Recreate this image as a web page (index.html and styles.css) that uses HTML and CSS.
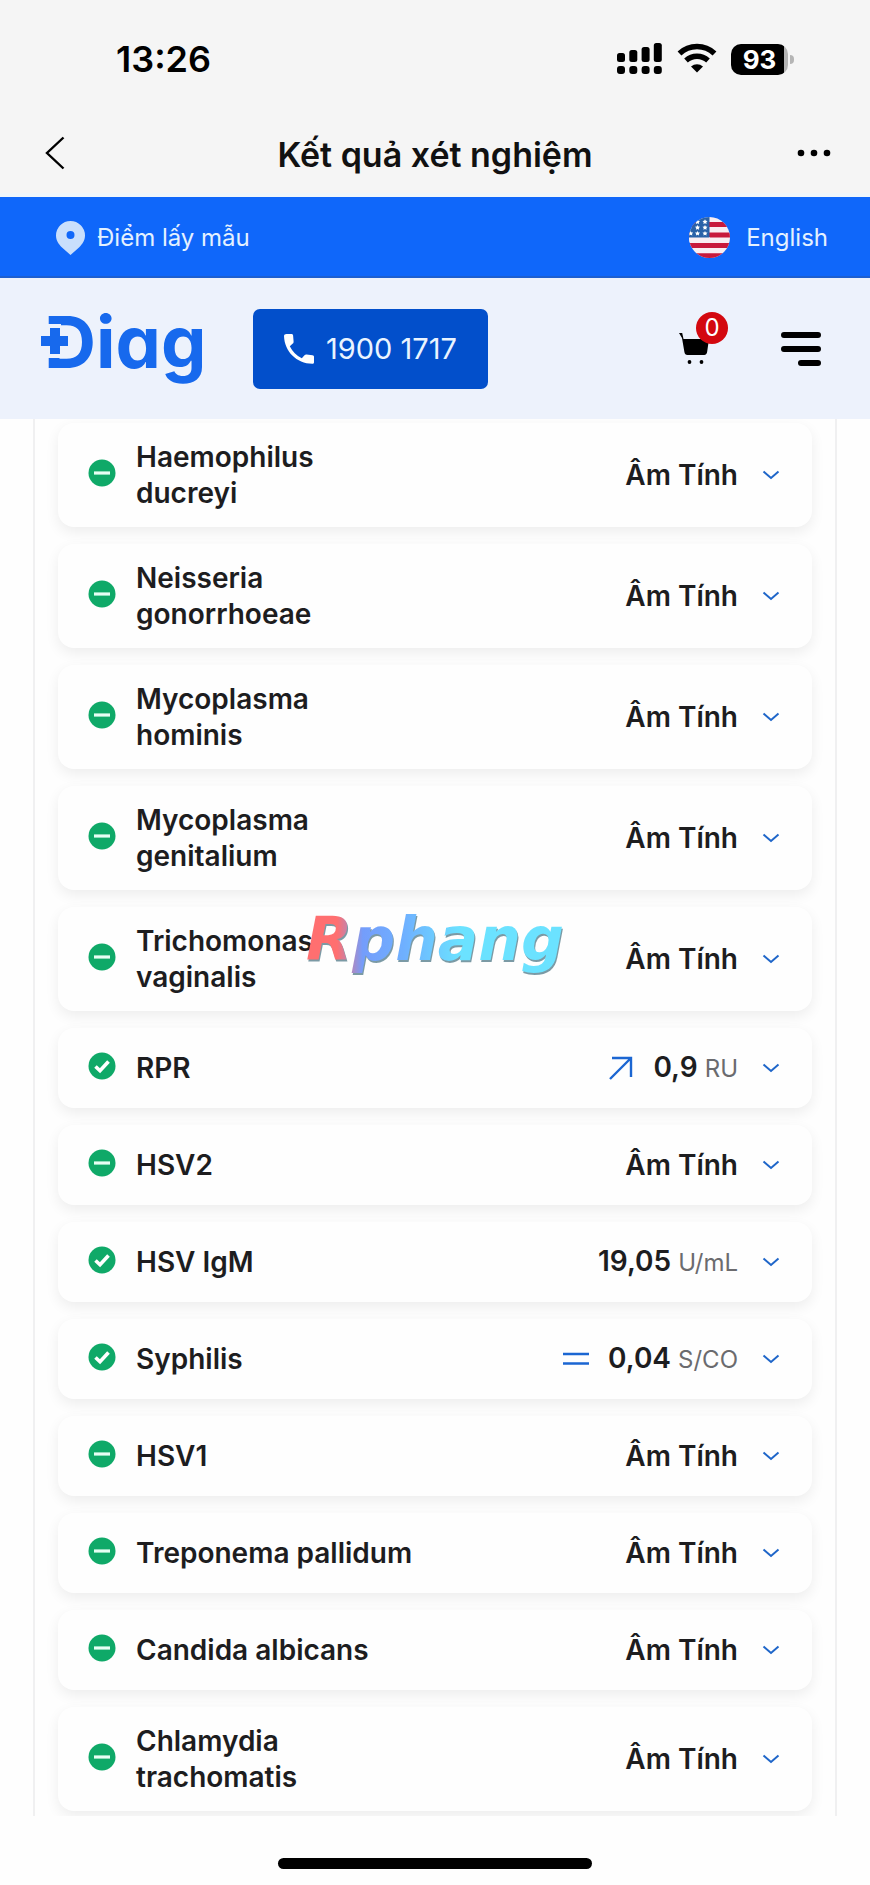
FILE: index.html
```
<!DOCTYPE html>
<html lang="vi">

<head>
    <meta charset="utf-8">
    <meta name="viewport" content="width=device-width, initial-scale=1.0">
    <title>Kết quả xét nghiệm</title>
    <link rel="stylesheet" href="styles.css">
</head>

<body>

    <svg class="symbols" aria-hidden="true">
        <symbol id="minus" viewBox="0 0 28 32">
            <circle cx="14" cy="14" r="13.5" fill="#0fa968" />
            <path d="M6 14h16" stroke="#e6fff4" stroke-width="3.2" />
        </symbol>
        <symbol id="check" viewBox="0 0 28 32">
            <circle cx="14" cy="14" r="13.5" fill="#0fa968" />
            <path d="M7.5 14.5l4.5 4.3 8.5-9.3" fill="none" stroke="#fff" stroke-width="3.6" />
        </symbol>
        <symbol id="chevron" viewBox="0 0 22 22">
            <path d="M3.5 7.5l7.5 6.5 7.5-6.5" fill="none" stroke="#1f66c9" stroke-width="2" />
        </symbol>
    </svg>

    <div class="statusbar">
        <span class="clock">13:26</span>
        <div class="status-icons">
            <svg width="46" height="32" viewBox="0 0 46 32">
                <rect x="0" y="10" width="8" height="9" rx="2.5" />
                <rect x="12.3" y="7" width="8" height="12" rx="2.5" />
                <rect x="24.6" y="4" width="8" height="15" rx="2.5" />
                <rect x="36.8" y="0" width="8" height="19" rx="2.5" />
                <rect x="0" y="23" width="8" height="8" rx="3" />
                <rect x="12.3" y="23" width="8" height="8" rx="3" />
                <rect x="24.6" y="23" width="8" height="8" rx="3" />
                <rect x="36.8" y="23" width="8" height="8" rx="3" />
            </svg>
            <svg width="40" height="32" viewBox="0 0 40 32">
                <path d="M2.5 10.5a25.5 25.5 0 0 1 35 0" fill="none" stroke="#000" stroke-width="5.6" />
                <path d="M9 17.5a16.5 16.5 0 0 1 22 0" fill="none" stroke="#000" stroke-width="5.4" />
                <path d="M14 23.5a9.5 9.5 0 0 1 12 0l-6 6z" />
            </svg>
            <div class="battery">93</div>
        </div>
    </div>

    <div class="titlebar">
        <button class="icon-btn" aria-label="Quay lại">
            <svg width="34" height="34" viewBox="-6 0 34 34">
                <path d="M18.500 1.500L2 17l16.500 15.500" fill="none" stroke="#000" stroke-width="2.4" />
            </svg>
        </button>
        <h1>Kết quả xét nghiệm</h1>
        <button class="icon-btn" aria-label="Thêm">
            <svg width="34" height="34" viewBox="0 0 34 34">
                <circle cx="4" cy="17" r="3.3" />
                <circle cx="17" cy="17" r="3.3" />
                <circle cx="30" cy="17" r="3.3" />
            </svg>
        </button>
    </div>

    <div class="topbar">
        <a href="#" class="location">
            <svg width="29" height="34" viewBox="0 0 29 34">
                <path fill="#c9dffc" fill-rule="evenodd" d="M14.500 0A14.500 14.500 0 0 0 0 14.500c0 5 2.500 8.500 6 12L14.500 34l8.500-7.500c3.500-3.500 6-7 6-12A14.500 14.500 0 0 0 14.500 0zm0 10a4 4 0 1 1 0 8 4 4 0 0 1 0-8z" />
            </svg>
            Điểm lấy mẫu
        </a>
        <a href="#" class="language">
            <svg width="41" height="41" viewBox="0 0 41 41">
                <clipPath id="round">
                    <circle cx="20.5" cy="20.5" r="20.5" />
                </clipPath>
                <g clip-path="url(#round)">
                    <path fill="#f9eef2" d="M0 0h41v41H0z" />
                    <path stroke="#c8193c" stroke-width="5.200" d="M0 7.500h41M0 18h41M0 28.500h41M0 38.800h41" />
                    <path fill="#f9eef2" d="M0 20h21v6H0z" />
                    <path fill="#2a62a8" d="M0 0h20.500v20.500H0z" />
                    <g fill="#fff">
                        <path id="star" d="M16 2.300l.8 1.500 1.700.2-1.200 1.300.3 1.700-1.600-.8-1.600.8.3-1.700L13.500 4l1.700-.2z" />
                        <use href="#star" x="-7.500" />
                        <use href="#star" y="5.800" />
                        <use href="#star" x="-7.500" y="5.800" />
                        <use href="#star" y="11.600" />
                        <use href="#star" x="-7.500" y="11.600" />
                        <use href="#star" x="-14.300" y="11.600" />
                    </g>
                </g>
            </svg>
            English
        </a>
    </div>

    <header>
        <a href="#" class="logo" aria-label="Diag">
            <svg width="166" height="90" viewBox="0 0 166 90">
                <text x="3" y="64">Diag</text>
                <path fill="#edf2fc" d="M0 20h20v34H0zM18 29h12v15H18z" />
                <path stroke="#1769ed" stroke-width="10" d="M14 24v26M0 37h27" />
            </svg>
        </a>
        <a href="tel:19001717" class="phone">
            <svg width="30" height="30" viewBox="0 0 30 30">
                <path fill="#fff" d="M2.500 0h5c1 0 1.500.6 1.600 1.500l.5 6c0 1-.2 1.500-.8 2.100L5.800 12.200c2.700 5.500 6.500 9.300 12 12l2.700-3c.6-.6 1.200-.8 2-.7l6 .8c1 .2 1.500.8 1.500 1.700v5.200c0 1-.7 1.600-1.700 1.600C12.500 29.500.5 17.500 0 2 0 .8 1 0 2.500 0z" />
            </svg>
            1900 1717
        </a>
        <button class="icon-btn cart" aria-label="Giỏ hàng">
            <svg width="30" height="32" viewBox="0 0 30 32">
                <path d="M0 0h3.200l1.300 6H30l-1.800 12.500c-.3 2-1.200 3.500-3 3.500H8.500c-1.800 0-2.800-1.200-3.100-3L3 5z" />
                <circle cx="10.500" cy="29" r="1.900" />
                <circle cx="22.500" cy="29" r="1.900" />
            </svg>
            <span class="badge">0</span>
        </button>
        <button class="icon-btn" aria-label="Menu">
            <svg width="40" height="36" viewBox="0 0 40 36">
                <path d="M3 4h34M3 18h34M20 32h17" stroke="#000" stroke-width="6" stroke-linecap="round" />
            </svg>
        </button>
    </header>

    <main>
        <ul class="results">
            <li>
                <button class="result">
                    <svg class="state"><use href="#minus" /></svg>
                    <span class="name">Haemophilus ducreyi</span>
                    <span class="value">Âm Tính</span>
                    <svg class="arrow"><use href="#chevron" /></svg>
                </button>
            </li>
            <li>
                <button class="result">
                    <svg class="state"><use href="#minus" /></svg>
                    <span class="name">Neisseria gonorrhoeae</span>
                    <span class="value">Âm Tính</span>
                    <svg class="arrow"><use href="#chevron" /></svg>
                </button>
            </li>
            <li>
                <button class="result">
                    <svg class="state"><use href="#minus" /></svg>
                    <span class="name">Mycoplasma hominis</span>
                    <span class="value">Âm Tính</span>
                    <svg class="arrow"><use href="#chevron" /></svg>
                </button>
            </li>
            <li>
                <button class="result">
                    <svg class="state"><use href="#minus" /></svg>
                    <span class="name">Mycoplasma genitalium</span>
                    <span class="value">Âm Tính</span>
                    <svg class="arrow"><use href="#chevron" /></svg>
                </button>
            </li>
            <li>
                <button class="result">
                    <svg class="state"><use href="#minus" /></svg>
                    <span class="name">Trichomonas vaginalis</span>
                    <span class="value">Âm Tính</span>
                    <svg class="arrow"><use href="#chevron" /></svg>
                </button>
            </li>
            <li>
                <button class="result">
                    <svg class="state"><use href="#check" /></svg>
                    <span class="name">RPR</span>
                    <svg class="trend" viewBox="0 0 28 28">
                        <path d="M3 25L24 4M5 4h19v19" fill="none" stroke="#1b66d2" stroke-width="2.400" />
                    </svg>
                    <span class="value">0,9 <small>RU</small></span>
                    <svg class="arrow"><use href="#chevron" /></svg>
                </button>
            </li>
            <li>
                <button class="result">
                    <svg class="state"><use href="#minus" /></svg>
                    <span class="name">HSV2</span>
                    <span class="value">Âm Tính</span>
                    <svg class="arrow"><use href="#chevron" /></svg>
                </button>
            </li>
            <li>
                <button class="result">
                    <svg class="state"><use href="#check" /></svg>
                    <span class="name">HSV IgM</span>
                    <span class="value">19,05 <small>U/mL</small></span>
                    <svg class="arrow"><use href="#chevron" /></svg>
                </button>
            </li>
            <li>
                <button class="result">
                    <svg class="state"><use href="#check" /></svg>
                    <span class="name">Syphilis</span>
                    <svg class="trend" viewBox="0 0 28 28">
                        <path d="M1 9h26M1 18.500h26" stroke="#1b66d2" stroke-width="2.400" />
                    </svg>
                    <span class="value">0,04 <small>S/CO</small></span>
                    <svg class="arrow"><use href="#chevron" /></svg>
                </button>
            </li>
            <li>
                <button class="result">
                    <svg class="state"><use href="#minus" /></svg>
                    <span class="name">HSV1</span>
                    <span class="value">Âm Tính</span>
                    <svg class="arrow"><use href="#chevron" /></svg>
                </button>
            </li>
            <li>
                <button class="result">
                    <svg class="state"><use href="#minus" /></svg>
                    <span class="name">Treponema pallidum</span>
                    <span class="value">Âm Tính</span>
                    <svg class="arrow"><use href="#chevron" /></svg>
                </button>
            </li>
            <li>
                <button class="result">
                    <svg class="state"><use href="#minus" /></svg>
                    <span class="name">Candida albicans</span>
                    <span class="value">Âm Tính</span>
                    <svg class="arrow"><use href="#chevron" /></svg>
                </button>
            </li>
            <li>
                <button class="result">
                    <svg class="state"><use href="#minus" /></svg>
                    <span class="name">Chlamydia trachomatis</span>
                    <span class="value">Âm Tính</span>
                    <svg class="arrow"><use href="#chevron" /></svg>
                </button>
            </li>
        </ul>
    </main>

    <div class="homebar">
        <div class="indicator"></div>
    </div>

    <div class="watermark">Rphang</div>

</body>

</html>
```
FILE: styles.css
```
* {
    box-sizing: border-box;
}

body {
    margin: 0;
    position: relative;
    font-family: Inter, "Liberation Sans", sans-serif;
    background: #fefefe;
    color: #1d1d1f;
}

svg {
    display: block;
    flex-shrink: 0;
}

a {
    color: inherit;
    text-decoration: none;
}

button {
    font: inherit;
    color: inherit;
    border: 0;
    padding: 0;
    background: none;
    cursor: pointer;
}

.symbols {
    position: absolute;
    width: 0;
    height: 0;
}

/* phone status bar */
.statusbar {
    display: flex;
    justify-content: space-between;
    align-items: center;
    height: 118px;
    padding: 0 82px 0 116px;
    background: #f5f5f5;
    color: #000;
}

.clock {
    font-size: 36px;
    font-weight: 600;
}

.status-icons {
    display: flex;
    align-items: center;
    gap: 14px;
}

.battery {
    position: relative;
    width: 57px;
    height: 31px;
    border-radius: 10px;
    background: linear-gradient(to right, #000 53px, #b5b5b5 53px);
    color: #fff;
    font-size: 26px;
    font-weight: 700;
    line-height: 31px;
    text-align: center;
}

.battery::after {
    content: "";
    position: absolute;
    right: -6px;
    top: 11px;
    width: 4px;
    height: 9px;
    border-radius: 0 4px 4px 0;
    background: #b5b5b5;
}

.titlebar {
    display: flex;
    justify-content: space-between;
    align-items: center;
    height: 79px;
    padding: 0 39px 5px;
    border-bottom: 4px solid #f0f6fa;
    background: #f5f5f5;
}

.titlebar h1 {
    margin: 0;
    padding-top: 4px;
    font-size: 34px;
    font-weight: 600;
    line-height: 40px;
    color: #111;
}

.topbar {
    display: flex;
    justify-content: space-between;
    align-items: center;
    height: 81px;
    padding: 2px 42px 0 56px;
    border-bottom: 2px solid #1d5fd0;
    background: #0f67fa;
    color: #e4f1ff;
    font-size: 24px;
}

.location {
    display: flex;
    align-items: center;
    gap: 12px;
}

.language {
    display: flex;
    align-items: center;
    gap: 16px;
}

header {
    display: flex;
    align-items: center;
    height: 141px;
    padding: 0 49px 0 41px;
    background: #edf2fc;
}

.logo svg {
    overflow: visible;
}

.logo text {
    font-size: 72px;
    font-weight: 700;
    font-feature-settings: "cv11";
    fill: #1769ed;
}

.phone {
    display: flex;
    align-items: center;
    justify-content: center;
    gap: 12px;
    width: 235px;
    height: 80px;
    margin-left: 46px;
    border-radius: 7px;
    background: #024fcb;
    color: #eaf4ff;
    font-size: 29px;
}

.cart {
    position: relative;
    margin-left: auto;
    margin-right: 72px;
}

.badge {
    position: absolute;
    left: 17px;
    top: -21px;
    width: 32px;
    height: 32px;
    border-radius: 50%;
    background: #d3080f;
    color: #fff;
    font-size: 24px;
    line-height: 32px;
    text-align: center;
}

/* results list */
main {
    margin: 0 33px;
    padding: 4px 23px 5px;
    border-left: 2px solid #f0f0f1;
    border-right: 2px solid #f0f0f1;
    overflow: hidden;
}

.results {
    display: flex;
    flex-direction: column;
    gap: 17px;
    margin: 0;
    padding: 0;
    list-style: none;
}

.result {
    display: flex;
    align-items: center;
    width: 100%;
    min-height: 80px;
    padding: 16px 30px;
    border-radius: 16px;
    background: #fefefe;
    box-shadow: 0 5px 14px rgba(0, 0, 0, 0.07);
    font-size: 28px;
    font-weight: 600;
    line-height: 36px;
    text-align: left;
}

.state {
    width: 28px;
    height: 32px;
    margin-right: 20px;
}

.name {
    max-width: 282px;
    margin-right: auto;
}

.value small {
    font-size: 24px;
    font-weight: 400;
    color: #6b6b6e;
}

.trend {
    width: 28px;
    height: 28px;
    margin-right: 18px;
}

.arrow {
    width: 22px;
    height: 22px;
    margin-left: 22px;
}

.homebar {
    padding: 42px 0 16px;
}

.indicator {
    width: 36%;
    height: 11px;
    margin: 0 auto;
    border-radius: 6px;
    background: #000;
}

.watermark {
    position: absolute;
    left: 50%;
    top: 50%;
    transform: translate(-50%, -50%);
    font-family: "DejaVu Sans", sans-serif;
    font-size: 60px;
    font-style: italic;
    font-weight: 700;
    line-height: 80px;
    padding-bottom: 8px;
    background: linear-gradient(to right, #ff6f70 12%, #749dfb 22%, #6fb0ff 38%, #6be2ff 60%);
    -webkit-background-clip: text;
    background-clip: text;
    color: transparent;
    filter: drop-shadow(1px 2px 0 #7b9aa5);
    pointer-events: none;
}
```
